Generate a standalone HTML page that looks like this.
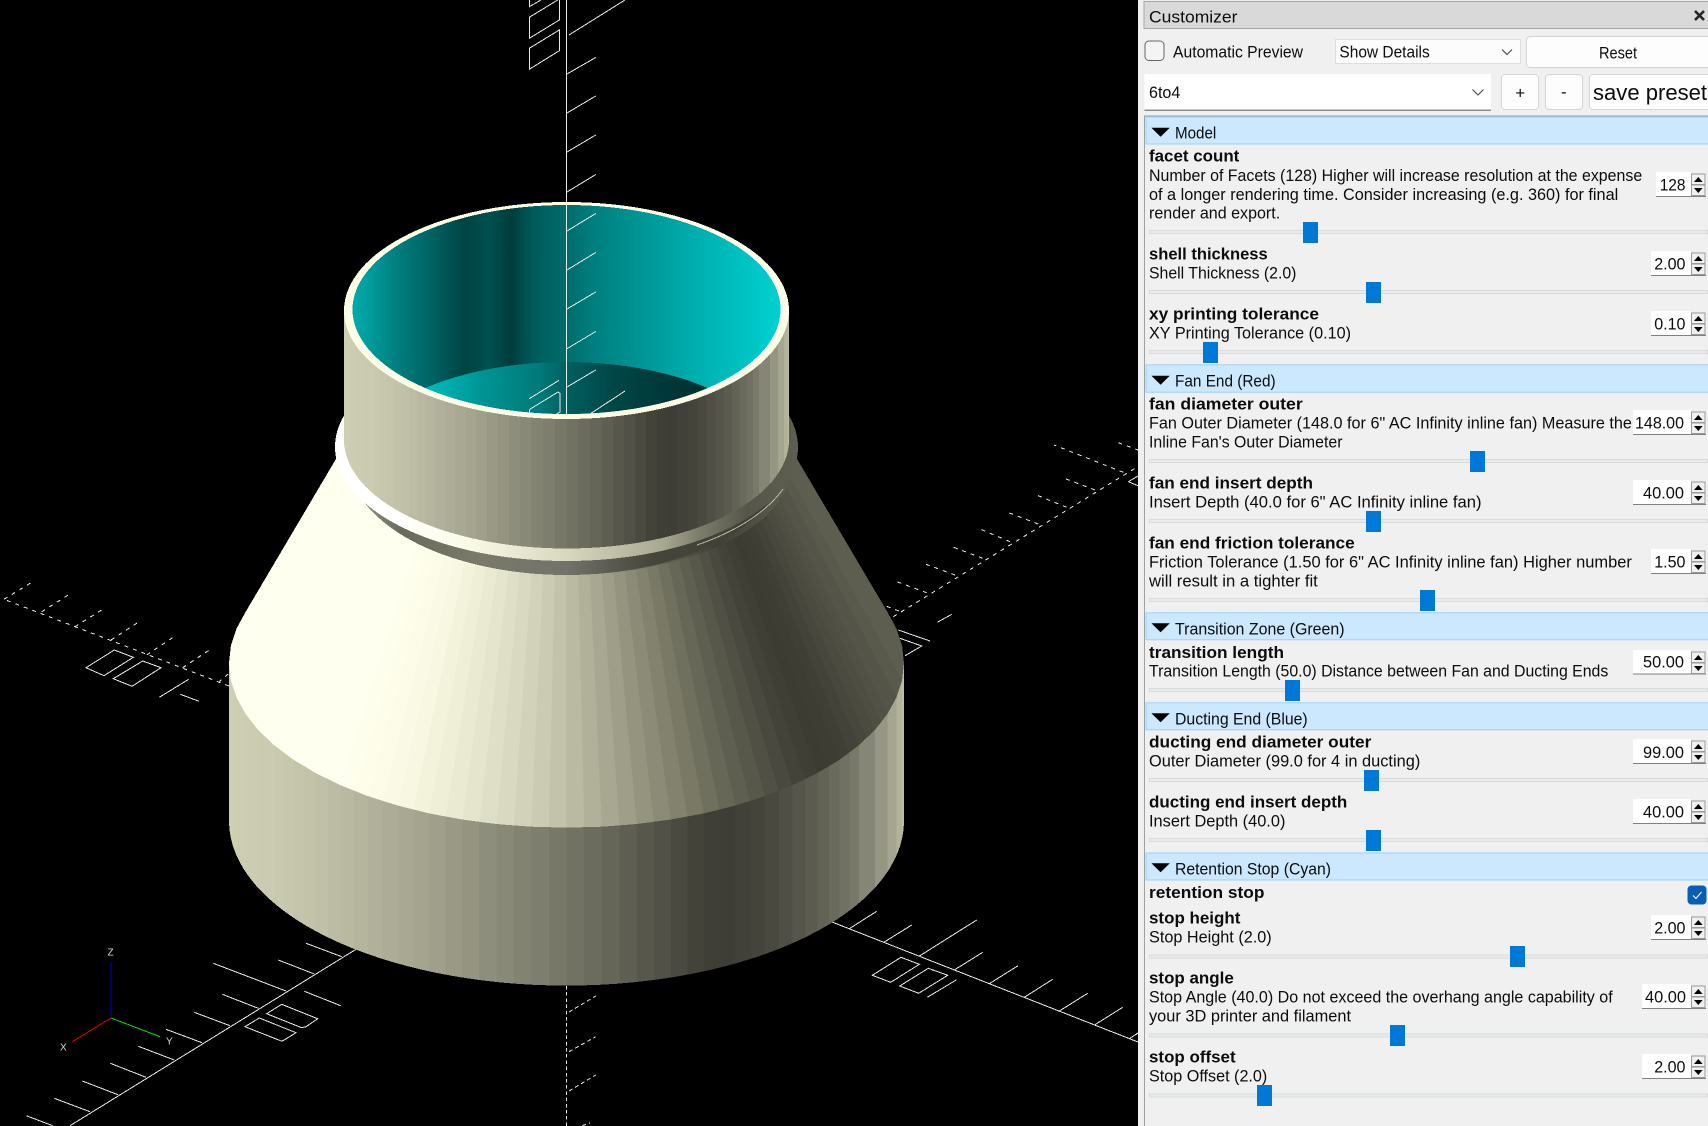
<!DOCTYPE html>
<html lang="en"><head><meta charset="utf-8"><title>Customizer</title>
<style>
html,body{margin:0;padding:0;background:#000;width:1708px;height:1126px;overflow:hidden}
svg{display:block;font-family:"Liberation Sans",sans-serif;font-size:17px}
.a{stroke:#eaeaea;stroke-width:1;fill:none;shape-rendering:crispEdges}
.d{stroke-dasharray:4 5}
.m{shape-rendering:crispEdges}
text{fill:#0c0c0c;transform:translateY(-.7px)}
text.b{font-weight:bold;transform:translateY(-.4px)}
.fld{fill:#fff}
.sl{fill:#e9ecea;stroke:#d8dbd9;stroke-width:1}
.th{fill:#0078d7}
.hd{fill:#cce8ff}
.hl{fill:#99d1ff}
.btn{fill:#fdfdfd;stroke:#d4d4d4;stroke-width:1}
</style></head>
<body>
<svg width="1708" height="1126" viewBox="0 0 1708 1126" xmlns="http://www.w3.org/2000/svg">
<defs>
<linearGradient id="o" x1="0" x2="1" y1="0" y2="0">
<stop offset="0" stop-color="#cfcfb6"/><stop offset=".0109" stop-color="#cfcfb6"/>
<stop offset=".0109" stop-color="#cdcdb4"/><stop offset=".0245" stop-color="#cdcdb4"/>
<stop offset=".0245" stop-color="#ccccb3"/><stop offset=".0432" stop-color="#ccccb3"/>
<stop offset=".0432" stop-color="#cbcbb2"/><stop offset=".067" stop-color="#cbcbb2"/>
<stop offset=".067" stop-color="#c9c9b0"/><stop offset=".0806" stop-color="#c9c9b0"/>
<stop offset=".0806" stop-color="#c7c7ae"/><stop offset=".0955" stop-color="#c7c7ae"/>
<stop offset=".0955" stop-color="#c5c5ac"/><stop offset=".1114" stop-color="#c5c5ac"/>
<stop offset=".1114" stop-color="#c3c3aa"/><stop offset=".1284" stop-color="#c3c3aa"/>
<stop offset=".1284" stop-color="#c0c0a8"/><stop offset=".1464" stop-color="#c0c0a8"/>
<stop offset=".1464" stop-color="#bcbca4"/><stop offset=".1654" stop-color="#bcbca4"/>
<stop offset=".1654" stop-color="#b9b9a2"/><stop offset=".1853" stop-color="#b9b9a2"/>
<stop offset=".1853" stop-color="#b5b59e"/><stop offset=".2061" stop-color="#b5b59e"/>
<stop offset=".2061" stop-color="#b1b19b"/><stop offset=".2277" stop-color="#b1b19b"/>
<stop offset=".2277" stop-color="#adad97"/><stop offset=".25" stop-color="#adad97"/>
<stop offset=".25" stop-color="#a8a893"/><stop offset=".273" stop-color="#a8a893"/>
<stop offset=".273" stop-color="#a4a48f"/><stop offset=".2966" stop-color="#a4a48f"/>
<stop offset=".2966" stop-color="#9f9f8b"/><stop offset=".3208" stop-color="#9f9f8b"/>
<stop offset=".3208" stop-color="#999986"/><stop offset=".3455" stop-color="#999986"/>
<stop offset=".3455" stop-color="#949481"/><stop offset=".3706" stop-color="#949481"/>
<stop offset=".3706" stop-color="#8e8e7c"/><stop offset=".396" stop-color="#8e8e7c"/>
<stop offset=".396" stop-color="#898978"/><stop offset=".4218" stop-color="#898978"/>
<stop offset=".4218" stop-color="#838372"/><stop offset=".4477" stop-color="#838372"/>
<stop offset=".4477" stop-color="#7e7e6e"/><stop offset=".4738" stop-color="#7e7e6e"/>
<stop offset=".4738" stop-color="#787869"/><stop offset=".5" stop-color="#787869"/>
<stop offset=".5" stop-color="#727264"/><stop offset=".5262" stop-color="#727264"/>
<stop offset=".5262" stop-color="#6c6c5e"/><stop offset=".5523" stop-color="#6c6c5e"/>
<stop offset=".5523" stop-color="#656558"/><stop offset=".5782" stop-color="#656558"/>
<stop offset=".5782" stop-color="#5e5e52"/><stop offset=".604" stop-color="#5e5e52"/>
<stop offset=".604" stop-color="#57574c"/><stop offset=".6294" stop-color="#57574c"/>
<stop offset=".6294" stop-color="#515147"/><stop offset=".6545" stop-color="#515147"/>
<stop offset=".6545" stop-color="#4a4a41"/><stop offset=".6792" stop-color="#4a4a41"/>
<stop offset=".6792" stop-color="#43433a"/><stop offset=".7034" stop-color="#43433a"/>
<stop offset=".7034" stop-color="#3f3f37"/><stop offset=".727" stop-color="#3f3f37"/>
<stop offset=".727" stop-color="#3e3e36"/><stop offset=".75" stop-color="#3e3e36"/>
<stop offset=".75" stop-color="#414139"/><stop offset=".7723" stop-color="#414139"/>
<stop offset=".7723" stop-color="#44443b"/><stop offset=".7939" stop-color="#44443b"/>
<stop offset=".7939" stop-color="#494940"/><stop offset=".8147" stop-color="#494940"/>
<stop offset=".8147" stop-color="#4f4f45"/><stop offset=".8346" stop-color="#4f4f45"/>
<stop offset=".8346" stop-color="#55554a"/><stop offset=".8536" stop-color="#55554a"/>
<stop offset=".8536" stop-color="#5b5b50"/><stop offset=".8716" stop-color="#5b5b50"/>
<stop offset=".8716" stop-color="#626255"/><stop offset=".8886" stop-color="#626255"/>
<stop offset=".8886" stop-color="#69695c"/><stop offset=".9045" stop-color="#69695c"/>
<stop offset=".9045" stop-color="#717163"/><stop offset=".9194" stop-color="#717163"/>
<stop offset=".9194" stop-color="#79796a"/><stop offset=".933" stop-color="#79796a"/>
<stop offset=".933" stop-color="#868676"/><stop offset=".9568" stop-color="#868676"/>
<stop offset=".9568" stop-color="#969685"/><stop offset=".9755" stop-color="#969685"/>
<stop offset=".9755" stop-color="#a5a590"/><stop offset=".9891" stop-color="#a5a590"/>
<stop offset=".9891" stop-color="#b3b39c"/><stop offset=".9973" stop-color="#b3b39c"/>
<stop offset=".9973" stop-color="#bdbda5"/><stop offset="1" stop-color="#bdbda5"/>
</linearGradient>
<linearGradient id="c" gradientUnits="userSpaceOnUse" x1="352.5" x2="780.5" y1="0" y2="0">
<stop offset="0" stop-color="#00abab"/>
<stop offset=".03" stop-color="#00a0a0"/>
<stop offset=".10" stop-color="#007f7f"/>
<stop offset=".18" stop-color="#006464"/>
<stop offset=".26" stop-color="#004444"/>
<stop offset=".32" stop-color="#004f4f"/>
<stop offset=".37" stop-color="#003c3c"/>
<stop offset=".42" stop-color="#005a5a"/>
<stop offset=".5" stop-color="#006c6c"/>
<stop offset=".57" stop-color="#008080"/>
<stop offset=".65" stop-color="#009090"/>
<stop offset=".73" stop-color="#00a0a0"/>
<stop offset=".80" stop-color="#00aeae"/>
<stop offset=".88" stop-color="#00bcbc"/>
<stop offset=".96" stop-color="#00caca"/>
<stop offset="1" stop-color="#00d0d0"/>
</linearGradient>
<linearGradient id="f" gradientUnits="userSpaceOnUse" x1="425" x2="708" y1="0" y2="0">
<stop offset="0" stop-color="#00bdbd"/>
<stop offset=".2" stop-color="#009494"/>
<stop offset=".4" stop-color="#007a7a"/>
<stop offset=".5" stop-color="#006060"/>
<stop offset=".65" stop-color="#004848"/>
<stop offset=".82" stop-color="#003a3a"/>
<stop offset="1" stop-color="#002f2f"/>
</linearGradient>
<linearGradient id="r" x1="0" x2="1" y1="0" y2="0">
<stop offset="0" stop-color="#ffffff"/>
<stop offset=".13" stop-color="#ffffff"/>
<stop offset=".28" stop-color="#fbfbe8"/>
<stop offset=".5" stop-color="#d8d8c0"/>
<stop offset=".71" stop-color="#a8a890"/>
<stop offset=".78" stop-color="#80806f"/>
<stop offset=".89" stop-color="#55554a"/>
<stop offset="1" stop-color="#5e5e50"/>
</linearGradient>
<linearGradient id="g" x1="0" x2="1" y1="0" y2="0">
<stop offset="0" stop-color="#a0a08a"/>
<stop offset=".12" stop-color="#6a6a5c"/>
<stop offset=".3" stop-color="#7a7a6a"/>
<stop offset=".5" stop-color="#72726a"/>
<stop offset=".7" stop-color="#45453b"/>
<stop offset="1" stop-color="#3f3f36"/>
</linearGradient>
<linearGradient id="k" x1="0" x2="1" y1="0" y2="0">
<stop offset="0" stop-color="#fffff0"/>
<stop offset=".17" stop-color="#fffff0"/>
<stop offset=".3" stop-color="#f7f7e2"/>
<stop offset=".5" stop-color="#c3c3ab"/>
<stop offset=".65" stop-color="#797966"/>
<stop offset=".83" stop-color="#3f3f36"/>
<stop offset="1" stop-color="#5e5e50"/>
</linearGradient>
<clipPath id="in"><ellipse cx="566.5" cy="309.5" rx="214" ry="104.5"/></clipPath>
<g id="s">
<rect x="1691.5" y="2" width="13.5" height="10.5" fill="#f0f0f0" stroke="#9a9a9a"/>
<rect x="1691.5" y="13" width="13.5" height="10.5" fill="#f0f0f0" stroke="#9a9a9a"/>
<polygon points="1694,10 1698.3,5 1702.6,10" fill="#000"/>
<polygon points="1694,16 1702.6,16 1698.3,21" fill="#000"/>
</g>
</defs>

<rect width="1708" height="1126" fill="#000"/>

<!-- axes behind model -->
<g class="a">
<path d="M566.5 0V202"/>
<path d="M569 35L625 0M567 74L595.7 57.5M567 113L595.7 96M567 152L595.7 135M567 192L595.7 174.5"/>
<path d="M529.3 69.3V48.3L559.3 30V50.7ZM529.3 38.3V17.3L559.3 -1V20ZM529.3 0V6.7L541 0"/>
<path d="M832 922L1138 1042M849.3 928.7L876.7 911.3M884.3 942L911.7 925M919 956.3L976.7 920M954.3 970L982.7 952.3M989.3 983.7L1018 965.7M1024.3 997.3L1052.7 979.3M1059.3 1011L1087.7 993.3M1095 1024.7L1122.7 1007.3M1130 1038.3L1138 1033"/>
<path d="M872.3 975.3L901 957.3L919.3 964.3L890.7 982.3ZM899.7 986L928.3 968.3L947.7 975.3L918.7 993.3ZM927.3 997.3L956.7 979.7"/>
<path d="M70 1125.7L356 949.3M341.7 956.7L306 943.3M314.3 974L278.3 960M286 991L213.3 963.3M258.3 1008.3L222.3 994.3M230 1025.7L194.3 1012.3M202 1042.7L166 1029.3M174.3 1060L138.3 1046.3M146 1077.3L110.3 1063.3M118 1094.7L82.3 1081M90 1111.7L54.3 1098.3M52.7 1125.7L26.3 1115.7M340.7 1005.7L304.3 991.3"/>
<path d="M266.7 1013.7L281.7 1004.3L317.7 1018.7L306 1026.7L301.7 1027.7ZM245 1026.7L259.3 1018L296 1032.7L282 1041.3Z"/>
<path d="M86 667.7L114.3 650L133.3 657.3L104 675.7ZM113.3 678.7L142.7 661L161 667.7L132 686.3ZM159.3 697.3L188.7 679.3M180.3 694.3L199 701.3"/>
<path d="M898.3 630L930 641M900 638.3L921.7 646L905 655.7M937.3 622.3L951.7 614.3M1128.3 481.7L1138 476M1128.3 481.7L1138 485.7"/>
</g>
<g class="a" style="stroke-dasharray:3.5 2.7"><path d="M566.5 986V1126"/></g>
<g class="a" style="stroke-dasharray:4 3"><path d="M569 1012L595.7 996M569 1051.7L595.7 1036.7M569 1091L595.7 1075M569 1130L590 1123"/></g>
<g class="a d">
<path d="M229 686L4 599.3M4 599.3L32.7 581.7M41.7 611.7L68.3 595M75 626.7L102.7 609.3M111 640L137.7 622.7M146.7 655L174 636.7M182.7 667.7L209.3 650M218.3 682.3L228.3 674"/>
<path d="M893.3 616.7L1136 467.7M1123.3 472.3L1054 445M1095 490L1061.7 477.3M1066.7 507.3L1034 494M1038.3 524L1006 511.7M1010 541.7L978.3 528.3M982.7 558.3L950 546M955 575L923.3 563.3M926.7 592.7L894 580.7M899 611L884 605.3M1118.3 442.7L1138 450"/>
</g>

<!-- model -->
<g class="m">
<path d="M229 663V821A337.5 164.6 0 0 0 904 821V663Z" fill="url(#o)"/>
<g transform="translate(566.5 0)">
<polygon fill="#fffff0" points="-321,612.1 -330.1,628.8 -335.6,645.8 -337.5,663 -335.6,680.2 -330.1,697.2 -321,713.9 -308.3,730 -292.3,745.3 -273,759.8 -250.8,773.1 -225.8,785.3 -150.5,546.7 -167.2,538.6 -182,529.7 -194.9,520 -205.5,509.7 -214,499 -220.1,487.9 -223.8,476.5 -225,465 -223.8,453.5 -220.1,442.1 -214,431"/>
<polygon fill="#fefeed" points="-225.8,785.3 -212.1,790.8 -141.4,550.4 -150.5,546.7"/>
<polygon fill="#fdfdea" points="-212.1,790.8 -198.4,796.2 -132.3,554 -141.4,550.4"/>
<polygon fill="#fcfce8" points="-198.4,796.2 -183.6,800.9 -122.4,557.2 -132.3,554"/>
<polygon fill="#f9f9e5" points="-183.6,800.9 -168.8,805.5 -112.5,560.3 -122.4,557.2"/>
<polygon fill="#f7f7e2" points="-168.8,805.5 -153,809.5 -102,562.9 -112.5,560.3"/>
<polygon fill="#f3f3dc" points="-153,809.5 -137.3,813.4 -91.5,565.5 -102,562.9"/>
<polygon fill="#efefd8" points="-137.3,813.4 -120.8,816.5 -80.5,567.6 -91.5,565.5"/>
<polygon fill="#eaead3" points="-120.8,816.5 -104.3,819.5 -69.5,569.6 -80.5,567.6"/>
<polygon fill="#e5e5ce" points="-104.3,819.5 -87.3,821.8 -58.2,571.1 -69.5,569.6"/>
<polygon fill="#dfdfc8" points="-87.3,821.8 -70.2,824 -46.8,572.6 -58.2,571.1"/>
<polygon fill="#d9d9c2" points="-70.2,824 -52.8,825.4 -35.2,573.5 -46.8,572.6"/>
<polygon fill="#d2d2ba" points="-52.8,825.4 -35.3,826.7 -23.5,574.4 -35.2,573.5"/>
<polygon fill="#cbcbb3" points="-35.3,826.7 -17.7,827.2 -11.8,574.7 -23.5,574.4"/>
<polygon fill="#c3c3ab" points="-17.7,827.2 0,827.6 0,575 -11.8,574.7"/>
<polygon fill="#babaa3" points="0,827.6 17.7,827.2 11.8,574.7 0,575"/>
<polygon fill="#b1b19a" points="17.7,827.2 35.3,826.7 23.5,574.4 11.8,574.7"/>
<polygon fill="#a8a892" points="35.3,826.7 52.8,825.4 35.2,573.5 23.5,574.4"/>
<polygon fill="#9e9e89" points="52.8,825.4 70.2,824 46.8,572.6 35.2,573.5"/>
<polygon fill="#95957f" points="70.2,824 87.3,821.8 58.2,571.1 46.8,572.6"/>
<polygon fill="#8b8b77" points="87.3,821.8 104.3,819.5 69.5,569.6 58.2,571.1"/>
<polygon fill="#82826e" points="104.3,819.5 120.8,816.5 80.5,567.6 69.5,569.6"/>
<polygon fill="#797966" points="120.8,816.5 137.3,813.4 91.5,565.5 80.5,567.6"/>
<polygon fill="#70705f" points="137.3,813.4 153,809.5 102,562.9 91.5,565.5"/>
<polygon fill="#676757" points="153,809.5 168.8,805.5 112.5,560.3 102,562.9"/>
<polygon fill="#5f5f51" points="168.8,805.5 183.6,800.9 122.4,557.2 112.5,560.3"/>
<polygon fill="#57574a" points="183.6,800.9 198.4,796.2 132.3,554 122.4,557.2"/>
<polygon fill="#505045" points="198.4,796.2 212.1,790.8 141.4,550.4 132.3,554"/>
<polygon fill="#494940" points="212.1,790.8 225.8,785.3 150.5,546.7 141.4,550.4"/>
<polygon fill="#43433a" points="225.8,785.3 238.3,779.2 158.9,542.7 150.5,546.7"/>
<polygon fill="#3f3f36" points="238.3,779.2 250.8,773.1 167.2,538.6 158.9,542.7"/>
<polygon fill="#3c3c33" points="250.8,773.1 261.9,766.5 174.6,534.2 167.2,538.6"/>
<polygon fill="#3d3d34" points="261.9,766.5 273,759.8 182,529.7 174.6,534.2"/>
<polygon fill="#3f3f36" points="273,759.8 282.7,752.6 188.5,524.9 182,529.7"/>
<polygon fill="#434339" points="282.7,752.6 292.3,745.3 194.9,520 188.5,524.9"/>
<polygon fill="#47473d" points="292.3,745.3 300.3,737.7 200.2,514.9 194.9,520"/>
<polygon fill="#4b4b40" points="300.3,737.7 308.3,730 205.5,509.7 200.2,514.9"/>
<polygon fill="#4e4e43" points="308.3,730 314.7,722 209.8,504.4 205.5,509.7"/>
<polygon fill="#515146" points="314.7,722 321,713.9 214,499 209.8,504.4"/>
<polygon fill="#545448" points="321,713.9 330.1,697.2 220.1,487.9 214,499"/>
<polygon fill="#59594c" points="330.1,697.2 335.6,680.2 223.8,476.5 220.1,487.9"/>
<polygon fill="#5e5e50" points="335.6,680.2 337.5,663 335.6,645.8 330.1,628.8 321,612.1 214,431 220.1,442.1 223.8,453.5 225,465 223.8,476.5"/>
</g>
<ellipse cx="566.5" cy="465" rx="225" ry="110" fill="url(#k)"/>
<ellipse cx="566.5" cy="459" rx="218" ry="116" fill="url(#g)"/>
<ellipse cx="566.5" cy="447" rx="231.5" ry="114" fill="url(#r)"/>
<path d="M783 489A231.5 114 0 0 1 697 545" fill="none" stroke="#b8b8a0" stroke-width="1"/>
<path d="M344 310V440A222.5 108.5 0 0 0 789 440V310Z" fill="url(#o)"/>
<ellipse cx="566.5" cy="310.5" rx="222.5" ry="108.5" fill="#fdfde5"/>
<ellipse cx="566.5" cy="309.5" rx="214" ry="104.5" fill="url(#c)"/>
<g clip-path="url(#in)"><ellipse cx="566.5" cy="466.5" rx="214" ry="104.5" fill="url(#f)"/></g>
</g>
<g clip-path="url(#in)" class="a">
<path d="M566.5 200V420M567 231L595.7 213.5M567 270L595.7 252.5M567 309L595.7 292M567 348.7L595.7 331.5M567 387L595.7 370M590 414L625 391M529.3 398.7L559 380.3M529.5 409.5L558 392L560 393.5V412L553 416M529.5 409.5V416"/>
</g>

<!-- view axes -->
<g style="shape-rendering:crispEdges" fill="none" stroke-width="1">
<path d="M111 1018V962.7" stroke="#0000d8"/>
<path d="M111 1018L72.3 1041.7" stroke="#e00000"/>
<path d="M111 1018L160 1036.7" stroke="#00e000"/>
</g>
<text x="107.5" y="956" style="font-size:10px;fill:#d8d8d8">Z</text>
<text x="60" y="1051" style="font-size:10px;fill:#d8d8d8">X</text>
<text x="166" y="1045" style="font-size:10px;fill:#d8d8d8">Y</text>

<!-- panel -->
<rect x="1138" y="0" width="570" height="1126" fill="#f0f0f0"/>
<rect x="1144" y="1.5" width="570" height="27" fill="#d9d9d9" stroke="#a6a6a6"/>
<text x="1149" y="23" textLength="88.5" lengthAdjust="spacingAndGlyphs">Customizer</text>
<path d="M1695 11L1704 20M1704 11L1695 20" stroke="#222" stroke-width="2.6" fill="none"/>

<rect x="1145" y="41" width="19" height="19.5" rx="4" fill="#f4f4f4" stroke="#666"/>
<text x="1173" y="58" textLength="130" lengthAdjust="spacingAndGlyphs">Automatic Preview</text>
<rect x="1335.5" y="39.5" width="185" height="24" fill="#fcfcfc" stroke="#dedede"/>
<text x="1339.4" y="58" textLength="90.3" lengthAdjust="spacingAndGlyphs">Show Details</text>
<path d="M1502 49.5L1507 54.5L1512 49.5" fill="none" stroke="#444" stroke-width="1.1"/>
<rect class="btn" x="1526.5" y="36.5" width="190" height="31" rx="4"/>
<text x="1599" y="59" textLength="38" lengthAdjust="spacingAndGlyphs">Reset</text>

<rect x="1144.5" y="74" width="346.5" height="36" fill="#fff"/>
<rect x="1144.5" y="109.5" width="346.5" height="1.5" fill="#8c8c8c"/>
<text x="1149" y="98.5" textLength="31.3" lengthAdjust="spacingAndGlyphs">6to4</text>
<path d="M1472.5 89.5L1478 95L1483.5 89.5" fill="none" stroke="#444" stroke-width="1.1"/>
<rect class="btn" x="1501.5" y="74.5" width="37" height="35" rx="4"/>
<text x="1515.2" y="99">+</text>
<rect class="btn" x="1545.5" y="74.5" width="37" height="35" rx="4"/>
<text x="1561" y="98">-</text>
<rect class="btn" x="1589.5" y="74.5" width="130" height="35" rx="4"/>
<text x="1593" y="100.5" textLength="114" lengthAdjust="spacingAndGlyphs" style="font-size:22px">save preset</text>

<rect x="1144" y="116" width="1" height="1010" fill="#a0a0a0"/>
<rect x="1144" y="115.5" width="564" height="1" fill="#a0a0a0"/>

<!-- headers -->
<rect class="hl" x="1145.5" y="116.5" width="563" height="28"/><rect class="hd" x="1146.5" y="117.5" width="562" height="26"/>
<polygon points="1151.4,127.7 1169.8,127.7 1160.6,136.7" fill="#000"/>
<text x="1175" y="139" textLength="41.3" lengthAdjust="spacingAndGlyphs">Model</text>

<rect class="hl" x="1145.5" y="364.3" width="563" height="28.4"/><rect class="hd" x="1146.5" y="365.3" width="562" height="26.4"/>
<polygon points="1151.4,375.7 1169.8,375.7 1160.6,384.7" fill="#000"/>
<text x="1175" y="387.3" textLength="100.6" lengthAdjust="spacingAndGlyphs">Fan End (Red)</text>

<rect class="hl" x="1145.5" y="612.3" width="563" height="28"/><rect class="hd" x="1146.5" y="613.3" width="562" height="26"/>
<polygon points="1151.4,623.3 1169.8,623.3 1160.6,632.3" fill="#000"/>
<text x="1175" y="635.3" textLength="169.6" lengthAdjust="spacingAndGlyphs">Transition Zone (Green)</text>

<rect class="hl" x="1145.5" y="702.3" width="563" height="28"/><rect class="hd" x="1146.5" y="703.3" width="562" height="26"/>
<polygon points="1151.4,713.3 1169.8,713.3 1160.6,722.3" fill="#000"/>
<text x="1175" y="725.3" textLength="132.7" lengthAdjust="spacingAndGlyphs">Ducting End (Blue)</text>

<rect class="hl" x="1145.5" y="852.5" width="563" height="28"/><rect class="hd" x="1146.5" y="853.5" width="562" height="26"/>
<polygon points="1151.4,863.3 1169.8,863.3 1160.6,872.3" fill="#000"/>
<text x="1175" y="875.3" textLength="156" lengthAdjust="spacingAndGlyphs">Retention Stop (Cyan)</text>

<!-- slider tracks -->
<rect class="sl" x="1149.5" y="230.5" width="558" height="3"/>
<rect class="sl" x="1149.5" y="290.5" width="558" height="3"/>
<rect class="sl" x="1149.5" y="350.5" width="558" height="3"/>
<rect class="sl" x="1149.5" y="459.5" width="558" height="3"/>
<rect class="sl" x="1149.5" y="519.5" width="558" height="3"/>
<rect class="sl" x="1149.5" y="598.5" width="558" height="3"/>
<rect class="sl" x="1149.5" y="688.5" width="558" height="3"/>
<rect class="sl" x="1149.5" y="778.5" width="558" height="3"/>
<rect class="sl" x="1149.5" y="838.5" width="558" height="3"/>
<rect class="sl" x="1149.5" y="955" width="558" height="3"/>
<rect class="sl" x="1149.5" y="1034" width="558" height="3"/>
<rect class="sl" x="1149.5" y="1094" width="558" height="3"/>

<!-- text -->
<text class="b" x="1149" y="162" textLength="90.3" lengthAdjust="spacingAndGlyphs">facet count</text>
<text x="1149" y="181.5" textLength="493.2" lengthAdjust="spacingAndGlyphs">Number of Facets (128) Higher will increase resolution at the expense</text>
<text x="1149" y="200.5" textLength="469.2" lengthAdjust="spacingAndGlyphs">of a longer rendering time. Consider increasing (e.g. 360) for final</text>
<text x="1149" y="219.3" textLength="131.2" lengthAdjust="spacingAndGlyphs">render and export.</text>

<text class="b" x="1149" y="260" textLength="118.7" lengthAdjust="spacingAndGlyphs">shell thickness</text>
<text x="1149" y="279.3" textLength="147.4" lengthAdjust="spacingAndGlyphs">Shell Thickness (2.0)</text>

<text class="b" x="1149" y="320" textLength="170" lengthAdjust="spacingAndGlyphs">xy printing tolerance</text>
<text x="1149" y="339.3" textLength="202" lengthAdjust="spacingAndGlyphs">XY Printing Tolerance (0.10)</text>

<text class="b" x="1149" y="410" textLength="153.7" lengthAdjust="spacingAndGlyphs">fan diameter outer</text>
<text x="1149" y="429.3" textLength="482.9" lengthAdjust="spacingAndGlyphs">Fan Outer Diameter (148.0 for 6" AC Infinity inline fan) Measure the</text>
<text x="1149" y="448.3" textLength="193.5" lengthAdjust="spacingAndGlyphs">Inline Fan's Outer Diameter</text>

<text class="b" x="1149" y="489" textLength="164" lengthAdjust="spacingAndGlyphs">fan end insert depth</text>
<text x="1149" y="508.3" textLength="332.5" lengthAdjust="spacingAndGlyphs">Insert Depth (40.0 for 6" AC Infinity inline fan)</text>

<text class="b" x="1149" y="549" textLength="205.7" lengthAdjust="spacingAndGlyphs">fan end friction tolerance</text>
<text x="1149" y="568.3" textLength="482.9" lengthAdjust="spacingAndGlyphs">Friction Tolerance (1.50 for 6" AC Infinity inline fan) Higher number</text>
<text x="1149" y="587.3" textLength="168.8" lengthAdjust="spacingAndGlyphs">will result in a tighter fit</text>

<text class="b" x="1149" y="658.3" textLength="135" lengthAdjust="spacingAndGlyphs">transition length</text>
<text x="1149" y="677.3" textLength="459.3" lengthAdjust="spacingAndGlyphs">Transition Length (50.0) Distance between Fan and Ducting Ends</text>

<text class="b" x="1149" y="747.7" textLength="222.3" lengthAdjust="spacingAndGlyphs">ducting end diameter outer</text>
<text x="1149" y="767" textLength="271.3" lengthAdjust="spacingAndGlyphs">Outer Diameter (99.0 for 4 in ducting)</text>

<text class="b" x="1149" y="808" textLength="198.3" lengthAdjust="spacingAndGlyphs">ducting end insert depth</text>
<text x="1149" y="827.3" textLength="136.4" lengthAdjust="spacingAndGlyphs">Insert Depth (40.0)</text>

<text class="b" x="1149" y="898.3" textLength="115.4" lengthAdjust="spacingAndGlyphs">retention stop</text>
<rect x="1687.5" y="885.5" width="19" height="19" rx="4" fill="#0a5fb4"/>
<path d="M1693 895.5L1696 898.5L1701.5 892" fill="none" stroke="#fff" stroke-width="1"/>

<text class="b" x="1149" y="924" textLength="91.4" lengthAdjust="spacingAndGlyphs">stop height</text>
<text x="1149" y="943.3" textLength="122.7" lengthAdjust="spacingAndGlyphs">Stop Height (2.0)</text>

<text class="b" x="1149" y="984" textLength="84.8" lengthAdjust="spacingAndGlyphs">stop angle</text>
<text x="1149" y="1003.3" textLength="463.7" lengthAdjust="spacingAndGlyphs">Stop Angle (40.0) Do not exceed the overhang angle capability of</text>
<text x="1149" y="1022.3" textLength="202" lengthAdjust="spacingAndGlyphs">your 3D printer and filament</text>

<text class="b" x="1149" y="1063" textLength="86.6" lengthAdjust="spacingAndGlyphs">stop offset</text>
<text x="1149" y="1082.3" textLength="118.3" lengthAdjust="spacingAndGlyphs">Stop Offset (2.0)</text>

<!-- thumbs -->
<rect class="th" x="1303" y="222" width="15" height="21"/>
<rect class="th" x="1366" y="282" width="15" height="21"/>
<rect class="th" x="1203" y="342" width="15" height="21"/>
<rect class="th" x="1470" y="451" width="15" height="21"/>
<rect class="th" x="1366" y="511" width="15" height="21"/>
<rect class="th" x="1420" y="590" width="15" height="21"/>
<rect class="th" x="1285" y="680" width="15" height="21"/>
<rect class="th" x="1364" y="770" width="15" height="21"/>
<rect class="th" x="1366" y="830" width="15" height="21"/>
<rect class="th" x="1510" y="946" width="15" height="21"/>
<rect class="th" x="1390" y="1025" width="15" height="21"/>
<rect class="th" x="1257" y="1085" width="15" height="21"/>

<!-- spin boxes -->
<rect class="fld" x="1656" y="172" width="35" height="24"/><rect x="1656" y="196" width="50" height="1" fill="#808080"/><use href="#s" y="172"/>
<text x="1659.7" y="191" textLength="25.8" lengthAdjust="spacingAndGlyphs">128</text>
<rect class="fld" x="1651" y="251" width="40" height="24"/><rect x="1651" y="275" width="55" height="1" fill="#808080"/><use href="#s" y="251"/>
<text x="1654.2" y="270" textLength="31.3" lengthAdjust="spacingAndGlyphs">2.00</text>
<rect class="fld" x="1651" y="311" width="40" height="24"/><rect x="1651" y="335" width="55" height="1" fill="#808080"/><use href="#s" y="311"/>
<text x="1654.2" y="330" textLength="31.3" lengthAdjust="spacingAndGlyphs">0.10</text>
<rect class="fld" x="1633" y="410" width="58" height="24"/><rect x="1633" y="434" width="73" height="1" fill="#808080"/><use href="#s" y="410"/>
<text x="1635" y="429.3" textLength="49" lengthAdjust="spacingAndGlyphs">148.00</text>
<rect class="fld" x="1633" y="480" width="58" height="24"/><rect x="1633" y="504" width="73" height="1" fill="#808080"/><use href="#s" y="480"/>
<text x="1643" y="499" textLength="41" lengthAdjust="spacingAndGlyphs">40.00</text>
<rect class="fld" x="1651" y="549" width="40" height="24"/><rect x="1651" y="573" width="55" height="1" fill="#808080"/><use href="#s" y="549"/>
<text x="1654.2" y="568.3" textLength="31.3" lengthAdjust="spacingAndGlyphs">1.50</text>
<rect class="fld" x="1633" y="650" width="58" height="23.5"/><rect x="1633" y="673.5" width="73" height="1" fill="#808080"/><use href="#s" y="650"/>
<text x="1643" y="668.3" textLength="41" lengthAdjust="spacingAndGlyphs">50.00</text>
<rect class="fld" x="1633" y="739" width="58" height="24"/><rect x="1633" y="763" width="73" height="1" fill="#808080"/><use href="#s" y="739"/>
<text x="1643" y="758.5" textLength="41" lengthAdjust="spacingAndGlyphs">99.00</text>
<rect class="fld" x="1633" y="799" width="58" height="24"/><rect x="1633" y="823" width="73" height="1" fill="#808080"/><use href="#s" y="799"/>
<text x="1643" y="818.3" textLength="41" lengthAdjust="spacingAndGlyphs">40.00</text>
<rect class="fld" x="1651" y="915" width="40" height="24"/><rect x="1651" y="939" width="55" height="1" fill="#808080"/><use href="#s" y="915"/>
<text x="1654.2" y="934.3" textLength="31.3" lengthAdjust="spacingAndGlyphs">2.00</text>
<rect class="fld" x="1642" y="984" width="49" height="24"/><rect x="1642" y="1008" width="64" height="1" fill="#808080"/><use href="#s" y="984"/>
<text x="1645" y="1003.3" textLength="41" lengthAdjust="spacingAndGlyphs">40.00</text>
<rect class="fld" x="1642" y="1054" width="49" height="24"/><rect x="1642" y="1078" width="64" height="1" fill="#808080"/><use href="#s" y="1054"/>
<text x="1654.2" y="1073.3" textLength="31.3" lengthAdjust="spacingAndGlyphs">2.00</text>
</svg>
</body></html>
